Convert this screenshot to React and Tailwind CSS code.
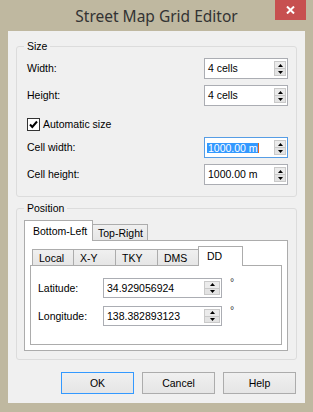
const UpArrow = () => (
  <svg width="5" height="3" viewBox="0 0 5 3" className="block">
    <polygon points="0,3 2.5,0 5,3" fill="#000" />
  </svg>
);

const DownArrow = () => (
  <svg width="5" height="3" viewBox="0 0 5 3" className="block">
    <polygon points="0,0 5,0 2.5,3" fill="#000" />
  </svg>
);

function Spinner({ value, width, height, btnW, btnH, focused, selected }) {
  return (
    <div
      className={`flex items-center shrink-0 bg-white border ${
        focused ? 'border-[#569de5]' : 'border-[#abadb3]'
      }`}
      style={{ width, height }}
    >
      <div className="flex-1 flex items-center pl-[2px] overflow-hidden whitespace-nowrap">
        {selected ? (
          <>
            <span className="bg-[#3399ff] text-white pl-[1px] leading-[10px] h-[10px]">{value}</span>
            <span className="w-[1px] h-[10px] bg-[#e2661c]" />
          </>
        ) : (
          <span className="pl-[1px]">{value}</span>
        )}
      </div>
      <div className="flex flex-col mr-[1px]" style={{ width: btnW, height: btnH }}>
        <div className="flex-1 flex items-center justify-center bg-[#ebebeb] border border-[#c9c9c9]">
          <UpArrow />
        </div>
        <div className="flex-1 flex items-center justify-center bg-[#e3e3e3] border border-t-0 border-[#c9c9c9]">
          <DownArrow />
        </div>
      </div>
    </div>
  );
}

function SizeRow({ label, value, className = '', focused, selected }) {
  return (
    <div className={`flex items-center justify-between h-[21px] pl-[3px] ${className}`}>
      <span>{label}</span>
      <Spinner value={value} width={84} height={21} btnW={12} btnH={15} focused={focused} selected={selected} />
    </div>
  );
}

const INNER_TABS = [
  { label: 'Local', w: 41 },
  { label: 'X-Y', w: 42 },
  { label: 'TKY', w: 42 },
  { label: 'DMS', w: 41 },
];

export default function App() {
  return (
    <div className="w-[313px] h-[412px] bg-[#bfb8a0] flex flex-col font-['Liberation_Sans',Arial,sans-serif] text-[10.5px] leading-[13px] text-black">
      <div className="relative h-[31px] shrink-0 flex items-center justify-center">
        <span className="font-['Noto_Sans',sans-serif] text-[15.5px] text-[#333333] leading-[20px]">
          Street Map Grid Editor
        </span>
        <div className="absolute top-0 right-[7px] w-[31px] h-[20px] bg-[#c75050] flex items-center justify-center">
          <svg width="9" height="8" viewBox="0 0 9 8">
            <path d="M1 0.5 L8 7.5 M8 0.5 L1 7.5" stroke="#fff" strokeWidth="2" />
          </svg>
        </div>
      </div>

      <div className="mx-[8px] h-[372px] bg-[#f0f0f0] px-[8px] flex flex-col">
        <fieldset className="mt-[8px] border border-[#dcdcdc] rounded-[3px] pl-[7px] pr-[8px] pb-[11px]">
          <legend className="px-[3px] leading-[14px]">Size</legend>
          <SizeRow label="Width:" value="4 cells" className="mt-[5px]" />
          <SizeRow label="Height:" value="4 cells" className="mt-[6px]" />
          <div className="mt-[12px] pl-[3px] flex items-center gap-[3px] h-[13px]">
            <svg width="13" height="13" viewBox="0 0 13 13" className="block">
              <rect x="0.5" y="0.5" width="12" height="12" fill="#fff" stroke="#333" />
              <path d="M3 6.5 L5.3 9 L10 3.5" stroke="#000" strokeWidth="2" fill="none" />
            </svg>
            <span>Automatic size</span>
          </div>
          <SizeRow label="Cell width:" value="1000.00 m" className="mt-[6px]" focused selected />
          <SizeRow label="Cell height:" value="1000.00 m" className="mt-[6px]" />
        </fieldset>

        <fieldset className="mt-[4px] border border-[#dcdcdc] rounded-[3px] pl-[7px] pr-[8px] pb-[8px]">
          <legend className="px-[3px] leading-[14px]">Position</legend>
          <div className="mt-[5px] flex items-end h-[21px]">
            <div className="relative z-10 w-[69px] h-[21px] bg-white border border-b-0 border-[#acacac] flex items-center pl-[8px]">
              Bottom-Left
            </div>
            <div className="w-[55px] h-[17px] bg-gradient-to-b from-[#f0f0f0] to-[#e5e5e5] border-t border-r border-[#acacac] flex items-center pl-[5px]">
              Top-Right
            </div>
          </div>
          <div className="relative -mt-[1px] bg-white border border-[#acacac] p-[5px]">
            <div className="flex items-end h-[20px] pl-[2px]">
              {INNER_TABS.map((t) => (
                <div
                  key={t.label}
                  className="h-[17px] bg-gradient-to-b from-[#f0f0f0] to-[#e5e5e5] border-t border-l border-[#acacac] flex items-center pl-[6px]"
                  style={{ width: t.w }}
                >
                  {t.label}
                </div>
              ))}
              <div className="relative z-10 w-[45px] h-[20px] bg-white border border-b-0 border-[#acacac] flex items-center pl-[8px]">
                DD
              </div>
            </div>
            <div className="relative -mt-[1px] h-[80px] bg-white border border-[#acacac] pt-[12px] pl-[7px]">
              <div className="flex items-start">
                <span className="w-[65px] h-[20px] flex items-center">Latitude:</span>
                <Spinner value="34.929056924" width={119} height={20} btnW={16} btnH={14} />
                <span className="ml-[8px] text-[#333] leading-[9px]">°</span>
              </div>
              <div className="flex items-start mt-[8px]">
                <span className="w-[65px] h-[20px] flex items-center">Longitude:</span>
                <Spinner value="138.382893123" width={119} height={20} btnW={16} btnH={14} />
                <span className="ml-[8px] text-[#333] leading-[9px]">°</span>
              </div>
            </div>
          </div>
        </fieldset>

        <div className="mt-[12px] flex justify-end gap-[8px] pr-[1px]">
          <button className="w-[73px] h-[22px] border border-[#3399ff] bg-gradient-to-b from-[#f0f0f0] to-[#e5e5e5]">
            OK
          </button>
          <button className="w-[73px] h-[22px] border border-[#acacac] bg-gradient-to-b from-[#f0f0f0] to-[#e5e5e5]">
            Cancel
          </button>
          <button className="w-[73px] h-[22px] border border-[#acacac] bg-gradient-to-b from-[#f0f0f0] to-[#e5e5e5]">
            Help
          </button>
        </div>
      </div>
    </div>
  );
}
